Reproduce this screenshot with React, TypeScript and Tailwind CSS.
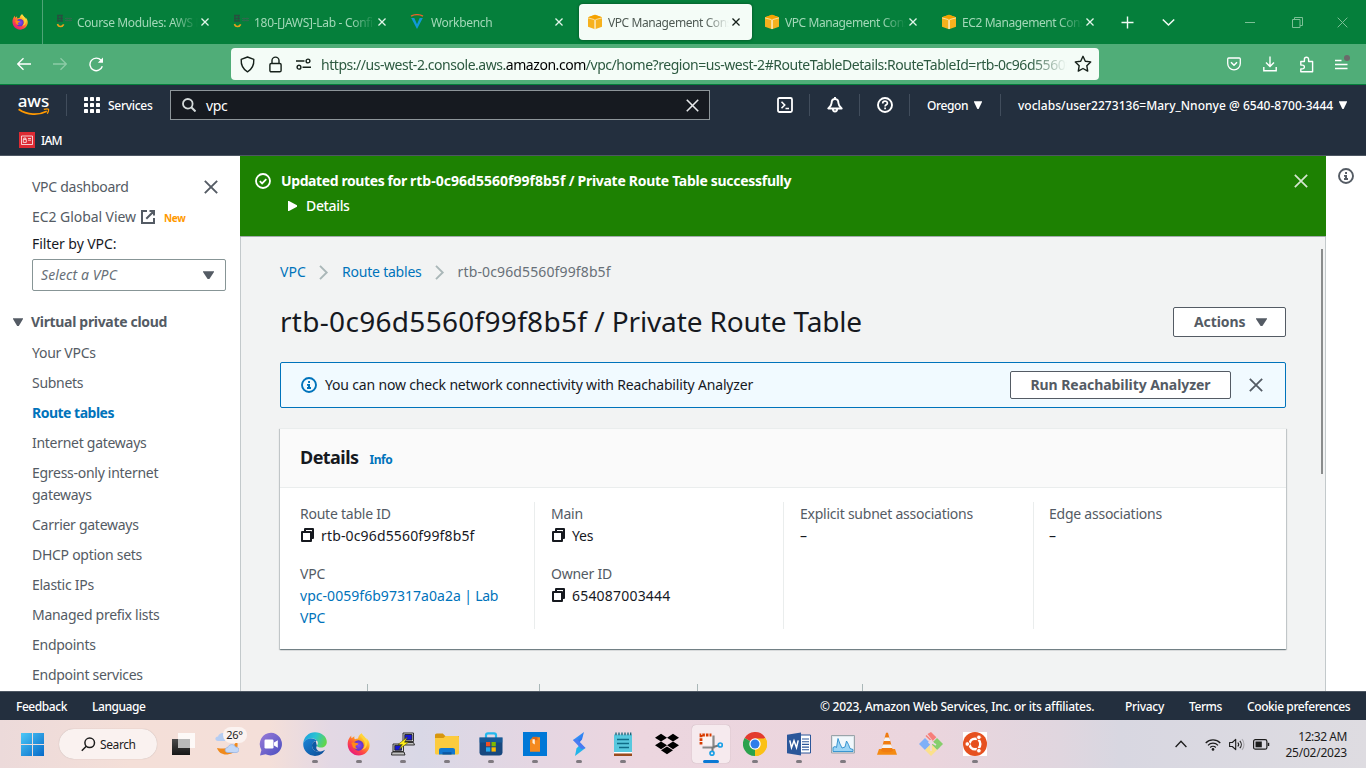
import type { ReactNode } from 'react';
import { FaDropbox } from 'react-icons/fa';

/* ---------- shared glyphs ---------- */

function Cross({ size, width = 1.2 }: { size: number; width?: number }) {
  return (
    <svg width={size} height={size} viewBox="0 0 10 10" fill="none" stroke="currentColor" strokeWidth={(width * 10) / size}>
      <path d="M.6.6l8.8 8.8M9.4.6L.6 9.4" />
    </svg>
  );
}

function CaretDown({ w = 10, h = 8 }: { w?: number; h?: number }) {
  return (
    <svg width={w} height={h} viewBox="0 0 10 8" fill="currentColor" preserveAspectRatio="none">
      <path d="M0 .3h10v.8L5.8 8H4.2L0 1.1z" />
    </svg>
  );
}

function InfoCircle() {
  return (
    <svg width="16" height="16" viewBox="0 0 16 16" fill="none" stroke="currentColor" strokeWidth="1.900">
      <circle cx="8" cy="8" r="7" />
      <path d="M7.100 4h1.900v2H7.100zM6 7h3v3h1v1.900H6V10h1V8.800H6z" fill="currentColor" stroke="none" />
    </svg>
  );
}

function CopyIcon() {
  return (
    <svg className="mr-[6px] mb-[2px] shrink-0" width="15" height="16" viewBox="0 0 15 16" fill="none" stroke="#16191f" strokeWidth="2" strokeLinejoin="round">
      <path d="M2 5h9v9H2z" />
      <path d="M5 5V2h8v9h-2" />
    </svg>
  );
}

/* ---------- browser icons ---------- */

function FirefoxLogo({ size }: { size: number }) {
  return (
    <svg width={size} height={size} viewBox="0 0 24 24">
      <defs>
        <linearGradient id="ffBody" x1="0.85" y1="0.1" x2="0.2" y2="0.95">
          <stop offset="0" stopColor="#fff44f" />
          <stop offset=".35" stopColor="#ffa01e" />
          <stop offset=".65" stopColor="#ff4a45" />
          <stop offset="1" stopColor="#e6157f" />
        </linearGradient>
        <radialGradient id="ffCore">
          <stop offset="0" stopColor="#8a4bf5" />
          <stop offset="1" stopColor="#5b32c4" />
        </radialGradient>
      </defs>
      <path
        d="M22.6 8.4c-.6-1.4-1.7-2.8-2.6-3.3.5 1 .9 2 1 2.8C19.500 4.500 17 3.200 15 .2c-2.300 1.500-3.300 3.900-3.400 5.500-1.200 0-2.300.4-3.200.9-.9-.6-.9-2-.6-3.200-1.200.5-2.200 1.400-2.900 2.200-.5-.6-.5-2.600-.4-3C4 3 3.300 3.900 2.600 4.900 1.300 6.800.6 9.300.7 12c.2 6.300 5.200 11.500 11.600 11.500 5.800 0 10.700-4.300 11.300-9.900.2-1.800-.2-3.600-1-5.200z"
        fill="url(#ffBody)"
      />
      <circle cx="12" cy="13" r="5.400" fill="url(#ffCore)" />
      <path d="M4.500 10.500c1.300-1.200 3.200-1.200 4.300-.4l3.200.8c-.3 1.500-2 1.700-2.700 2.200-1 1-.2 2.700 1.700 3-2.600 1-5.500-.4-5.500-3.600z" fill="#ff8a16" />
      <path d="M15 .2c-1.900 4 2.500 5.500 3.400 9.600.8 3.500-.9 6.400-3.300 7.800 4.600-.6 7-5 5.500-9.800C19.200 4.600 17 3.200 15 .2z" fill="#ffd43a" />
    </svg>
  );
}

function JawsFavicon() {
  return (
    <svg width="17" height="16" viewBox="0 0 17 16" fill="none">
      <path d="M1 1.500h6M1 4.500h6M2 1v6M5.500 1v6M1 7h6" stroke="#27503f" strokeWidth="1.400" />
      <path d="M9 4.500h7M9 6.500h7M11 3.500v4M14 3.500v4" stroke="#2e6b4d" strokeWidth="1" />
      <path d="M1.500 10c.8 3.200 4.700 3.400 6.200.3" stroke="#e9a21c" strokeWidth="1.600" />
    </svg>
  );
}

function WorkbenchFavicon() {
  return (
    <svg width="14" height="16" viewBox="0 0 14 16" fill="none">
      <path d="M1 2.200C4.500.4 9.500.4 13 2.200" stroke="#e8622a" strokeWidth="1.400" />
      <path d="M1.200 4l5.800 11L12.800 4H9.700L7 10.300 4.300 4z" fill="#1199d6" />
    </svg>
  );
}

function AwsCube() {
  return (
    <svg width="16" height="16" viewBox="0 0 16 16">
      <path d="M1 3.300L8 .8l7 2.500v9.500L8 15.300 1 12.800z" fill="#f6b11e" />
      <path d="M1 3.300L8 .8l7 2.500-7 1.900z" fill="#f5a300" />
      <path d="M1 3.900l6 1.600M9 5.500l6-1.600" fill="none" stroke="#fff" strokeOpacity=".7" strokeWidth=".8" />
      <path d="M7.200 5.600h1.700v9.300H7.200z" fill="#fdf0cf" fillOpacity=".8" />
    </svg>
  );
}

interface TabInfo {
  title: string;
  icon: ReactNode;
  tracking: string;
  active?: boolean;
}

const browserTabs: TabInfo[] = [
  { title: 'Course Modules: AWS Re/', icon: <JawsFavicon />, tracking: 'tracking-[-0.36px]' },
  { title: '180-[JAWS]-Lab - Configure', icon: <JawsFavicon />, tracking: 'tracking-[-0.3px]' },
  { title: 'Workbench', icon: <WorkbenchFavicon />, tracking: 'tracking-[-0.34px]' },
  { title: 'VPC Management Console', icon: <AwsCube />, tracking: 'tracking-[-0.42px]', active: true },
  { title: 'VPC Management Console', icon: <AwsCube />, tracking: 'tracking-[-0.42px]' },
  { title: 'EC2 Management Console', icon: <AwsCube />, tracking: 'tracking-[-0.4px]' },
];

function BrowserTab({ title, icon, tracking, active }: TabInfo) {
  return (
    <div
      className={
        active
          ? 'mr-1 flex h-9 w-[173px] shrink-0 items-center rounded-[4px] bg-[#f4fcf7] pl-2 text-[#4f5a54] shadow-[0_0_3px_rgba(0,0,0,0.45)]'
          : 'mr-1 flex h-9 w-[173px] shrink-0 items-center pl-2 text-[#a3d8b8]'
      }
    >
      <span className="flex w-[21px] shrink-0">{icon}</span>
      <span
        className={`mt-[2px] w-[121px] shrink-0 overflow-hidden text-[12px] whitespace-nowrap [mask-image:linear-gradient(to_right,#000_80%,transparent_100%)] ${tracking}`}
      >
        {title}
      </span>
      <span className={active ? 'ml-[3px] text-[#15201a]' : 'ml-[3px] text-[#e2f6ea]'}>
        <Cross size={8} width={1.3} />
      </span>
    </div>
  );
}

function TabStrip() {
  return (
    <div className="flex h-11 items-center bg-[#057f3b]">
      <div className="flex h-11 w-[43px] items-center justify-center border-r border-[#4fa477] pr-[3px]">
        <FirefoxLogo size={16} />
      </div>
      <div className="ml-[5px] flex">
        {browserTabs.map((t, i) => (
          <BrowserTab key={i} {...t} />
        ))}
      </div>
      <div className="ml-[11px] flex text-[#f0fbf4]">
        <svg width="13" height="13" viewBox="0 0 13 13" stroke="currentColor" strokeWidth="1.400">
          <path d="M6.500.500v12M.500 6.500h12" />
        </svg>
        <svg className="ml-7" width="13" height="13" viewBox="0 0 13 13" fill="none" stroke="currentColor" strokeWidth="1.600">
          <path d="M.8 3.500l5.700 5.500 5.700-5.500" />
        </svg>
      </div>
      <div className="ml-[70px] flex items-center text-[#7cc096]">
        <svg width="11" height="11" viewBox="0 0 11 11" stroke="currentColor">
          <path d="M0 5.500h10" />
        </svg>
        <svg className="ml-[36px]" width="11" height="11" viewBox="0 0 11 11" fill="none" stroke="currentColor">
          <path d="M.5 2.500h7.500v8H.5zM2.500 2.500v-2h8v8H8" />
        </svg>
        <span className="ml-[34px]">
          <Cross size={11} width={1} />
        </span>
      </div>
    </div>
  );
}

function NavToolbar() {
  return (
    <div className="flex h-[41px] items-center border-b border-[#057f3b] bg-[#50ad78]">
      <div className="ml-[17px] flex gap-[22px] text-white">
        <svg width="14" height="14" viewBox="0 0 14 14" fill="none" stroke="currentColor" strokeWidth="1.300">
          <path d="M14 7H.8M6.500 1.200L.7 7l5.800 5.800" />
        </svg>
        <svg className="text-[#8ccba6]" width="14" height="14" viewBox="0 0 14 14" fill="none" stroke="currentColor" strokeWidth="1.300">
          <path d="M0 7h13.200M7.500 1.200L13.300 7l-5.800 5.800" />
        </svg>
        <svg width="15" height="15" viewBox="0 0 15 15" fill="none" stroke="currentColor" strokeWidth="1.400">
          <path d="M13.300 9.300a6.300 6.300 0 1 1-1.200-6" />
          <path d="M14 .6v5.200H8.800z" fill="currentColor" stroke="none" />
        </svg>
      </div>
      <div className="ml-[127px] flex h-8 w-[868px] items-center rounded-[4px] bg-[#f4fcf7] pl-[9px] text-[#15201a]">
        <svg width="15" height="17" viewBox="0 0 15 17" fill="none" stroke="currentColor" strokeWidth="1.400" strokeLinejoin="round">
          <path d="M7.500 1l6.300 2.300c.3 5.500-1.800 10-6.300 12.500C3 13.300.9 8.800 1.200 3.300z" />
        </svg>
        <svg className="ml-[14px]" width="13" height="17" viewBox="0 0 13 17" fill="none" stroke="currentColor" strokeWidth="1.400">
          <rect x=".9" y="7.500" width="11.200" height="8.300" rx="1.300" />
          <path d="M3 7.500V4.600a3.500 3.500 0 0 1 7 0v2.900" />
        </svg>
        <svg className="ml-[14px]" width="15" height="12" viewBox="0 0 15 12" fill="none" stroke="currentColor" strokeWidth="1.400">
          <path d="M0 3h8.500M6.500 9.200H15" />
          <circle cx="12" cy="3" r="1.900" />
          <circle cx="3" cy="9.200" r="1.900" />
        </svg>
        <div className="ml-[10px] w-[746px] overflow-hidden text-[14px] tracking-[-0.46px] whitespace-nowrap text-[#2d5a41] [mask-image:linear-gradient(to_right,#000_95%,transparent_100%)]">
          https://us-west-2.console.aws.<span className="text-black">amazon.com</span>
          /vpc/home?region=us-west-2#RouteTableDetails:RouteTableId=rtb-0c96d5560f99f8b5f
        </div>
        <svg className="ml-[7px]" width="18" height="18" viewBox="0 0 18 18" fill="none" stroke="currentColor" strokeWidth="1.400" strokeLinejoin="round">
          <path d="M9 1.300l2.300 4.900 5.400.7-3.900 3.800.9 5.400L9 13.500l-4.700 2.600.9-5.400L1.300 6.900l5.400-.7z" />
        </svg>
      </div>
      <div className="ml-[128px] flex items-center text-white">
        <svg width="14" height="14" viewBox="0 0 14 14" fill="none" stroke="currentColor" strokeWidth="1.300" strokeLinejoin="round">
          <path d="M1.700 1h10.600c.6 0 1 .4 1 1v4.500a6.300 6.300 0 0 1-12.600 0V2c0-.6.400-1 1-1z" />
          <path d="M4 5.300l3 2.900 3-2.900" strokeWidth="1.500" />
        </svg>
        <svg className="ml-[22px]" width="14" height="16" viewBox="0 0 14 16" fill="none" stroke="currentColor" strokeWidth="1.400">
          <path d="M7 .5v9.700M3 6.500l4 4 4-4M.8 11v3.700h12.400V11" />
        </svg>
        <svg className="ml-[22px]" width="15" height="17" viewBox="0 0 15 17" fill="none" stroke="currentColor" strokeWidth="1.400" strokeLinejoin="round">
          <path d="M1.800 5.500h3.600V3.300a2.100 2.100 0 0 1 4.200 0v2.200h4v10.300H1.800v-2.900h1.700a1.900 1.900 0 0 0 0-3.800H1.800z" />
        </svg>
        <svg className="mb-[5px] ml-[21px]" width="16" height="16" viewBox="0 0 16 16" fill="none" stroke="currentColor" strokeWidth="1.300">
          <path d="M0 6.500h6.500M0 10.500h12.500M0 14.500h12.500" />
          <circle cx="12" cy="4" r="3" fill="#6a6a6a" stroke="none" />
        </svg>
      </div>
    </div>
  );
}

/* ---------- AWS console header ---------- */

function AwsLogo() {
  return (
    <div className="mt-[2px] ml-[18px] flex w-[31px] flex-col items-center text-white">
      <span className="h-[11px] text-[17px] leading-[9px] font-medium">aws</span>
      <svg className="mt-[1px]" width="32" height="8" viewBox="0 0 32 8" fill="none" stroke="#ff9900" strokeWidth="1.800">
        <path d="M.6 1.300c8.500 6 20 6.300 28.200 2" />
        <path d="M25.800 1.400c2-.6 4-.8 4.600-.2.500.7-.1 2.700-1.100 4.600" strokeWidth="1.300" />
      </svg>
    </div>
  );
}

function NavDivider({ className }: { className: string }) {
  return <div className={`h-[22px] w-px shrink-0 bg-[#414d5c] ${className}`} />;
}

function ConsoleHeader() {
  return (
    <header className="h-[71px] border-b border-[#4d5763] bg-[#232f3e] text-[12px] font-medium text-white">
      <div className="flex h-10 items-center">
        <AwsLogo />
        <NavDivider className="ml-[17px]" />
        <svg className="ml-[17px]" width="16" height="16" viewBox="0 0 16 16" fill="#fff">
          {[0, 6, 12].map((y) => [0, 6, 12].map((x) => <rect key={`${x}-${y}`} x={x} y={y} width="4" height="4" rx=".4" />))}
        </svg>
        <span className="mt-[2px] ml-2 w-[46px] tracking-[-0.28px]">Services</span>
        <div className="ml-4 flex h-[30px] w-[540px] items-center border border-[#8d9599] bg-[#161a20] pr-[10px] pl-[11px]">
          <svg width="14" height="14" viewBox="0 0 14 14" fill="none" stroke="#d5dbdb" strokeWidth="1.800">
            <circle cx="5.800" cy="5.800" r="4.800" />
            <path d="M9.300 9.300l4.200 4.200" strokeWidth="2" />
          </svg>
          <span className="ml-[10px] flex-1 text-[14px] font-normal tracking-[-0.3px]">vpc</span>
          <span className="text-[#e6e9ea]">
            <Cross size={13} width={1.6} />
          </span>
        </div>
        <svg className="ml-[67px]" width="16" height="16" viewBox="0 0 16 16" fill="none" stroke="#fff" strokeWidth="1.800">
          <rect x="1" y="1" width="14" height="14" rx="1.500" />
          <path d="M4.500 4.800L7.700 8l-3.200 3.200M8.500 11.500H12" strokeWidth="1.600" />
        </svg>
        <NavDivider className="ml-[16px]" />
        <svg className="ml-[17px]" width="16" height="16" viewBox="0 0 16 16" fill="none" stroke="#fff" strokeWidth="1.900" strokeLinejoin="round">
          <path d="M8 0v2M8 2C5.500 2 4.600 3.800 4.600 6c0 2.200-1 3.500-3.300 5.500h13.400C12.400 9.500 11.400 8.200 11.400 6 11.400 3.800 10.500 2 8 2z" />
          <path d="M5.900 12a2.100 2.500 0 0 0 4.200 0" />
        </svg>
        <NavDivider className="ml-[16px]" />
        <svg className="ml-[17px]" width="16" height="16" viewBox="0 0 16 16" fill="none" stroke="#fff" strokeWidth="1.900">
          <circle cx="8" cy="8" r="7" />
          <path d="M5.700 6.400c0-3 4.700-3 4.700-.2 0 1.600-2.300 1.600-2.300 3.200M8.100 10.500v1.700" strokeWidth="1.700" />
        </svg>
        <NavDivider className="ml-[16px]" />
        <span className="mt-[2px] ml-[17px] w-[47px] tracking-[-0.4px]">Oregon</span>
        <CaretDown w={8} h={8} />
        <NavDivider className="ml-[18px]" />
        <span className="mt-[2px] ml-[17px] w-[321px] tracking-[0.02px] whitespace-nowrap">voclabs/user2273136=Mary_Nnonye @ 6540-8700-3444</span>
        <CaretDown w={8} h={8} />
      </div>
      <div className="flex h-[30px] items-center pl-[19px]">
        <svg width="16" height="16" viewBox="0 0 16 16" fill="none" stroke="#fff" strokeOpacity=".85" strokeWidth=".9">
          <rect width="16" height="16" fill="#dd2b34" stroke="none" />
          <path d="M2.500 4h11v8.500h-11zM4.300 7.400h3v3h-3zM4.800 7.400V6h2v1.400M9 6.500h3M9 8.200h3" />
        </svg>
        <span className="mt-[2px] ml-[6px] tracking-[-0.8px]">IAM</span>
      </div>
    </header>
  );
}

/* ---------- sidebar ---------- */

const vpcLinks = [
  'Your VPCs',
  'Subnets',
  'Route tables',
  'Internet gateways',
  'Egress-only internet gateways',
  'Carrier gateways',
  'DHCP option sets',
  'Elastic IPs',
  'Managed prefix lists',
  'Endpoints',
  'Endpoint services',
];

function Sidebar() {
  return (
    <nav className="h-full w-[240px] shrink-0 overflow-hidden bg-white pt-5 text-[14px] leading-[22px] tracking-[-0.28px] text-[#545b64]">
      <div className="flex items-center justify-between pr-[22px] pl-8">
        <span>VPC dashboard</span>
        <Cross size={14} width={1.9} />
      </div>
      <div className="mt-2 flex h-[22px] items-center pl-8">
        <span className="tracking-[-0.06px]">EC2 Global View</span>
        <svg className="ml-[5px]" width="14" height="14" viewBox="0 0 14 14" fill="none" stroke="currentColor" strokeWidth="2">
          <path d="M6 1H1v12h12V8M8.500 1H13v4.500M13 1L5.300 8.700" />
        </svg>
        <span className="mt-[2px] ml-[9px] text-[10px] leading-none font-bold tracking-[-0.3px] text-[#ff9900]">New</span>
      </div>
      <div className="mt-[5px] pl-8 tracking-[-0.07px] text-[#16191f]">Filter by VPC:</div>
      <div className="mt-1 ml-8 flex h-8 w-[194px] items-center justify-between rounded-[2px] border border-[#879596] pr-[11px] pl-2">
        <span className="tracking-[0.1px] text-[#687078] italic">Select a VPC</span>
        <CaretDown w={11} h={8} />
      </div>
      <div className="mt-5 flex items-center pl-[13px] font-bold tracking-[-0.32px]">
        <CaretDown w={10} h={8} />
        <span className="ml-2">Virtual private cloud</span>
      </div>
      <ul className="mt-[9px] flex flex-col gap-2 pl-8">
        {vpcLinks.map((link) => (
          <li key={link} className={link === 'Route tables' ? 'font-bold tracking-[-0.5px] text-[#0073bb]' : 'w-[150px]'}>
            {link}
          </li>
        ))}
      </ul>
    </nav>
  );
}

/* ---------- main content ---------- */

function SuccessBanner() {
  return (
    <div className="flex h-20 shrink-0 bg-[#1d8102] pt-[14px] pr-[18px] pl-[15px] text-[14px] leading-[22px] text-white">
      <svg className="mt-[3px]" width="16" height="16" viewBox="0 0 16 16" fill="none" stroke="#fff" strokeWidth="1.800">
        <circle cx="8" cy="8" r="7" />
        <path d="M4.800 8.200l2.300 2.200 4.200-4.300" />
      </svg>
      <div className="ml-[10px] flex-1">
        <div className="font-bold tracking-[-0.4px]">
          Updated routes for <span className="tracking-[0.02px]">rtb-0c96d5560f99f8b5f</span>
          <span className="tracking-[-0.29px]"> / Private Route Table successfully</span>
        </div>
        <div className="mt-[3px] flex items-center pl-[7px]">
          <svg width="9" height="10" viewBox="0 0 9 10" fill="#fff">
            <path d="M0 0h1l8 4.300v1.400L1 10H0z" />
          </svg>
          <span className="ml-[9px] font-medium tracking-[-0.35px]">Details</span>
        </div>
      </div>
      <span className="mt-[4px] text-[#d5e6d0]">
        <Cross size={14} width={1.7} />
      </span>
    </div>
  );
}

function Chevron() {
  return (
    <svg className="mx-[13px]" width="10" height="15" viewBox="0 0 10 15" fill="none" stroke="#aab7b8" strokeWidth="1.900">
      <path d="M1 .8l6.700 6.700L1 14.200" />
    </svg>
  );
}

function Field({ label, children }: { label: string; children: ReactNode }) {
  return (
    <div>
      <div className="text-[#545b64]">{label}</div>
      <div className="h-[22px] text-[#16191f]">{children}</div>
    </div>
  );
}

function DetailsPanel() {
  return (
    <section className="mt-[20px] h-[221px] border-t border-[#eaeded] bg-white shadow-[0_1px_1px_0_rgba(0,28,36,0.35),1px_1px_1px_0_rgba(0,28,36,0.15),-1px_1px_1px_0_rgba(0,28,36,0.15)]">
      <div className="flex h-[59px] items-center border-b border-[#eaeded] bg-[#fafafa] px-5 pb-px">
        <h2 className="text-[18px] font-bold tracking-[-0.54px] text-[#16191f]">Details</h2>
        <span className="mt-1 ml-[11px] text-[12px] font-bold tracking-[-0.5px] text-[#0073bb]">Info</span>
      </div>
      <div className="mt-[14px] grid h-[127px] grid-cols-[255px_249px_250px_252px] text-[14px] leading-[22px] tracking-[-0.24px]">
        <div className="flex flex-col gap-4 border-r border-[#eaeded] pt-px pl-5">
          <Field label="Route table ID">
            <span className="flex items-center tracking-[0.15px]">
              <CopyIcon />
              rtb-0c96d5560f99f8b5f
            </span>
          </Field>
          <Field label="VPC">
            <a className="block w-[200px] tracking-[-0.24px] text-[#0073bb]">
              <span className="tracking-[0.04px]">vpc-0059f6b97317a0a2a</span> | Lab VPC
            </a>
          </Field>
        </div>
        <div className="flex flex-col gap-4 border-r border-[#eaeded] pt-px pl-4">
          <Field label="Main">
            <span className="flex items-center">
              <CopyIcon />
              Yes
            </span>
          </Field>
          <Field label="Owner ID">
            <span className="flex items-center tracking-[0.2px]">
              <CopyIcon />
              654087003444
            </span>
          </Field>
        </div>
        <div className="border-r border-[#eaeded] pt-px pl-4">
          <Field label="Explicit subnet associations">–</Field>
        </div>
        <div className="pt-px pl-[15px]">
          <Field label="Edge associations">–</Field>
        </div>
      </div>
    </section>
  );
}

function Content() {
  return (
    <div className="flex flex-1 border-t border-[#a3abad]">
      <div className="w-10 shrink-0 border-l border-[#c3c9cb]" />
      <div className="w-[1006px] shrink-0 pt-6">
        <div className="flex items-center text-[14px] leading-[22px] tracking-[-0.22px] text-[#0073bb]">
          <span className="tracking-[0.1px]">VPC</span>
          <Chevron />
          <span>Route tables</span>
          <Chevron />
          <span className="tracking-[0.13px] text-[#687078]">rtb-0c96d5560f99f8b5f</span>
        </div>
        <div className="mt-5 flex h-[38px] items-center justify-between">
          <h1 className="mb-[2px] text-[28px] leading-9 tracking-[-0.14px] text-[#16191f]">
            <span className="tracking-[0.3px]">rtb-0c96d5560f99f8b5f</span> / Private Route Table
          </h1>
          <div className="flex h-[30px] w-[113px] items-center rounded-[2px] border border-[#545b64] bg-white pb-px pl-5 text-[14px] font-bold tracking-[-0.1px] text-[#545b64]">
            <span className="mr-[11px]">Actions</span>
            <CaretDown w={11} h={8} />
          </div>
        </div>
        <div className="mt-[21px] flex h-[46px] items-center rounded-[2px] border border-[#0073bb] bg-[#f1faff] pl-5 text-[14px]">
          <span className="text-[#0073bb]">
            <InfoCircle />
          </span>
          <span className="mb-px ml-2 flex-1 tracking-[-0.17px] text-[#16191f]">You can now check network connectivity with Reachability Analyzer</span>
          <span className="flex h-7 w-[221px] items-center justify-center rounded-[2px] border border-[#545b64] bg-white pb-px font-bold tracking-[-0.06px] text-[#545b64]">
            Run Reachability Analyzer
          </span>
          <span className="mr-[22px] ml-[18px] text-[#545b64]">
            <Cross size={14} width={1.8} />
          </span>
        </div>
        <DetailsPanel />
        <div className="mt-[35px] grid h-[7px] grid-cols-[88px_172px_158px_165px]">
          <div className="border-r border-[#aab7b8]" />
          <div className="border-r border-[#aab7b8]" />
          <div className="border-r border-[#aab7b8]" />
          <div className="border-r border-[#aab7b8]" />
        </div>
      </div>
      <div className="flex flex-1 justify-end border-r border-[#c3c9cb] pt-3 pr-[2px]">
        <div className="h-[225px] w-[2px] bg-[#8a8c8c]" />
      </div>
    </div>
  );
}

function ConsoleFooter() {
  return (
    <footer className="flex h-[29px] items-center border-t border-[#4d5763] bg-[#232f3e] pt-[2px] pl-4 text-[12px] font-medium tracking-[-0.43px] whitespace-nowrap text-white">
      <span className="w-[76px]">Feedback</span>
      <span className="w-[728px]">Language</span>
      <span className="w-[305px] tracking-[-0.25px]">© 2023, Amazon Web Services, Inc. or its affiliates.</span>
      <span className="w-16 tracking-[-0.29px]">Privacy</span>
      <span className="w-[58px]">Terms</span>
      <span className="tracking-[-0.41px]">Cookie preferences</span>
    </footer>
  );
}

/* ---------- taskbar ---------- */

function Icon({ children }: { children: ReactNode }) {
  return (
    <svg width="24" height="24" viewBox="0 0 24 24" fill="none">
      {children}
    </svg>
  );
}

const taskView = (
  <Icon>
    <defs>
      <linearGradient id="tvDark" x1="0" y1="0" x2="0" y2="1">
        <stop offset="0" stopColor="#4a4a4a" />
        <stop offset="1" stopColor="#161616" />
      </linearGradient>
    </defs>
    <rect x="1" y="7" width="18" height="16" fill="url(#tvDark)" />
    <rect x="7" y="1" width="17" height="15" fill="#fff" fillOpacity=".8" />
    <rect x="7" y="7" width="12" height="9" fill="#b9b9b9" />
  </Icon>
);

const chat = (
  <Icon>
    <defs>
      <linearGradient id="chatBg" x1="0" y1="0" x2="1" y2="1">
        <stop offset="0" stopColor="#9a7bd8" />
        <stop offset="1" stopColor="#4a4fc0" />
      </linearGradient>
    </defs>
    <path d="M12 .8a11.300 11.300 0 1 1-5.400 21.400L1 23.500l1.400-5.600A11.300 11.300 0 0 1 12 .8z" fill="url(#chatBg)" />
    <rect x="5.500" y="7.500" width="9" height="9" rx="1.200" fill="#fff" />
    <path d="M15 10.500l3.800-2.300v7.600L15 13.500z" fill="#fff" />
  </Icon>
);

const edge = (
  <Icon>
    <defs>
      <linearGradient id="edgeTop" x1="0" y1=".2" x2="1" y2=".5">
        <stop offset="0" stopColor="#1c9fe0" />
        <stop offset=".5" stopColor="#2bc3d2" />
        <stop offset="1" stopColor="#63d64a" />
      </linearGradient>
      <linearGradient id="edgeLow" x1="0" y1="0" x2="1" y2="1">
        <stop offset="0" stopColor="#1b86d8" />
        <stop offset="1" stopColor="#0b4a93" />
      </linearGradient>
    </defs>
    <path d="M.2 11.400C.7 5 5.700.2 12 .2c6.800 0 11.800 4.500 11.800 9.800 0 3.500-2.600 5.600-5.700 5.600-2.300 0-4.200-.9-4.200-1.800 0-.6 1-1.100 1-2.700C14.900 8.500 12 6.500 8.700 6.500 4.700 6.500 1.500 8.300.2 11.400z" fill="url(#edgeTop)" />
    <path d="M.2 11.800C.8 8.700 4.200 6.500 8.300 6.500c2.500 0 4.700 1 5.700 2.300-3.700.2-5.500 3-4.800 6.200.8 3.500 4.600 5.400 8.300 4.600 1.800-.4 3.400-1.200 4.600-1.900-2 3.800-5.800 6.200-10.100 6.200C5.300 23.900 0 18.500.2 11.800z" fill="url(#edgeLow)" />
    <path d="M12.700 9c-3 .8-4.300 3.200-3.500 6 .9 3.500 4.600 5.400 8.300 4.600-3.500-.6-5.300-3.500-3.600-5.800z" fill="#0c59a4" />
  </Icon>
);

const putty = (
  <Icon>
    <g stroke="#222" strokeWidth=".9">
      <path d="M12 1h10.500v8.500H12z" fill="#d9d9d9" />
      <path d="M10.500 10.500h12l1 2.500h-12z" fill="#c3c3c3" />
      <path d="M2 12h10.500v7.500H2z" fill="#d9d9d9" />
      <path d="M1 20h12l1 3H.5z" fill="#c3c3c3" />
      <path d="M13.800 2.500H21V8h-7.200zM3.800 13.400h6.700v4.800H3.800z" fill="#1516d6" />
    </g>
    <path d="M16.500 5L7 12.500h4.300L8 17.500l9.500-7.300h-4z" fill="#ffee1a" stroke="#3a3a00" strokeWidth=".5" />
  </Icon>
);

const explorer = (
  <Icon>
    <path d="M0 3.500C0 2.300.7 1.600 1.800 1.600h6L10.300 4H24v4H0z" fill="#d7960f" />
    <path d="M0 6h8.500l2-2H22.500c1 0 1.500.5 1.500 1.500V21c0 .9-.6 1.500-1.500 1.500H1.500C.6 22.500 0 21.900 0 21z" fill="#fccb3e" />
    <path d="M4 22.500v-4.300c0-1.400.8-2.200 2.200-2.200h11.600c1.400 0 2.200.8 2.200 2.200v4.300z" fill="#1178d0" />
    <path d="M7.500 22.500v-2.300h9v2.300z" fill="#0b56a0" />
  </Icon>
);

const store = (
  <Icon>
    <path d="M7 6V3.200C7 2 7.700 1.300 9 1.300h6c1.300 0 2 .7 2 1.900V6" stroke="#22b8ee" strokeWidth="2.200" />
    <path d="M.5 5.500h23v14.700c0 2-1.200 3.300-3.300 3.300H3.800C1.700 23.500.5 22.200.5 20.200z" fill="#17487f" />
    <path d="M.5 5.500h23v5H.5z" fill="#1769ad" fillOpacity=".55" />
    <path d="M7 10h4.300v4.300H7z" fill="#f25022" />
    <path d="M12.500 10h4.300v4.300h-4.300z" fill="#7fba00" />
    <path d="M7 15.300h4.300v4.300H7z" fill="#25a8ee" />
    <path d="M12.500 15.300h4.300v4.300h-4.300z" fill="#ffb900" />
  </Icon>
);

const installer = (
  <Icon>
    <path d="M0 0h24v24H0z" fill="#0078d7" />
    <path d="M7 8l3-2.800h7v14.600H7z" fill="#f58a1f" />
    <path d="M9.500 4.800h5v3.400h-5z" fill="#d9661b" />
    <path d="M9.500 7.200h2.300v5.300l-2.300-1.500z" fill="#fff1de" />
  </Icon>
);

const sharp = (
  <Icon>
    <defs>
      <linearGradient id="boltBlue" x1="0" y1="0" x2="1" y2="1">
        <stop offset="0" stopColor="#3fb9ff" />
        <stop offset="1" stopColor="#2457e8" />
      </linearGradient>
    </defs>
    <path d="M17 0L6 8l5 4 4-4.500z" fill="url(#boltBlue)" />
    <path d="M8 24l10.500-8-5-4-4 4.500z" fill="#21b5ea" />
    <path d="M6 8l4-1 8.500 9-4 1.200z" fill="#4a7bf2" />
  </Icon>
);

const notepad = (
  <Icon>
    <path d="M3 2.500h18v18.300H3z" fill="#58c8de" />
    <path d="M3 20h18v1.600H3z" fill="#fff" />
    <path d="M3 21.500h18V24H3z" fill="#9a4a1c" />
    <path d="M5 .5v2.800M8 .5v2.800M11 .5v2.800M14 .5v2.800M17 .5v2.800M19.700.5v2.800" stroke="#155f75" strokeWidth="1.300" />
    <path d="M6 7.500h12M6 11.500h12M8 15.500h10" stroke="#0f6c88" strokeWidth="1.500" />
  </Icon>
);

const snip = (
  <Icon>
    <path d="M2 2h11v11H2z" fill="#fbf4f4" />
    <path d="M2 12.500V3h10.500" stroke="#d83b01" strokeWidth="2.800" strokeDasharray="2.600 1" />
    <path d="M14.500 3.500v12h-11" stroke="#8a8a8a" strokeWidth="2.200" />
    <path d="M14 15l5.500-1.500M13.500 15v4" stroke="#777" strokeWidth="2" />
    <circle cx="21.300" cy="13" r="2" stroke="#1aa0e6" strokeWidth="1.700" />
    <circle cx="13" cy="21.300" r="2" stroke="#1aa0e6" strokeWidth="1.700" />
  </Icon>
);

const chrome = (
  <Icon>
    <path d="M12 12L1.600 6A12 12 0 0 1 22.400 6z" fill="#e33b2e" />
    <path d="M12 12l10.400-6A12 12 0 0 1 12 24z" fill="#fbc116" />
    <path d="M12 12v12A12 12 0 0 1 1.600 6z" fill="#2ba24c" />
    <path d="M12 6.500h10.700A12 12 0 0 1 12 24l4.800-9.200z" fill="#fbc116" />
    <circle cx="12" cy="12" r="5.700" fill="#fff" />
    <circle cx="12" cy="12" r="4.500" fill="#2f7de9" />
  </Icon>
);

const word = (
  <Icon>
    <path d="M12 3h11.500v18H12z" fill="#fff" stroke="#2b579a" strokeWidth="1" />
    <path d="M15 7h7M15 9.700h7M15 12.400h7M15 15.100h7M15 17.800h7" stroke="#2b579a" strokeWidth="1.100" />
    <path d="M0 2.800L14 .5v23L0 21.200z" fill="#2b579a" />
    <path d="M2.800 8.300l1.700 7.400L7 8.800l2.500 6.900 1.700-7.400" stroke="#fff" strokeWidth="1.500" />
  </Icon>
);

const perf = (
  <Icon>
    <path d="M.5 3.500h23v17.500H.5z" fill="#dfe6ea" stroke="#9aa4aa" />
    <path d="M2 5h20v14.500H2z" fill="#f1f8fc" />
    <path d="M2 19.500v-4l2-1 1.500 1L7 6.500 9 12l2 4 3-1 1.500-6 2 3.500 1.500 4 3 1v2z" fill="#9ad4f5" stroke="#2b8ccc" strokeWidth=".9" />
  </Icon>
);

const vlc = (
  <Icon>
    <path d="M4 17h16l2 5.800H2z" fill="#f58a12" />
    <path d="M11 .8h2L18 19c-2.500 1.700-9.500 1.700-12 0z" fill="#f07c10" />
    <path d="M9.700 5.500h4.600l1 3.500H8.700zM7.700 12.500h8.600l1 3.500H6.700z" fill="#f4f4f4" />
  </Icon>
);

const git = (
  <Icon>
    <path d="M8.500 2L12 0l5.300 5.300-3.500 3.500z" fill="#f77e79" />
    <path d="M7 3.500L20 16" stroke="#f77e79" strokeWidth="1.500" />
    <path d="M0 12l6-6 6 6-6 6z" fill="#7fb0f7" />
    <path d="M18 6l6 6-6 6-6-6z" fill="#86ce6c" />
    <path d="M12 12l6 6-6 6-6-6z" fill="#fbe08c" />
    <path d="M9 10.500l3-3 3 3-3 3z" fill="#ecd8e0" />
    <path d="M12 8v11M12 10l5 3" stroke="#ecd8e0" strokeWidth="1.600" />
  </Icon>
);

const ubuntu = (
  <Icon>
    <path d="M0 0h24v24H0z" fill="#fff" />
    <circle cx="12" cy="12" r="12" fill="#e6501f" />
    <circle cx="12" cy="12" r="5.300" stroke="#fff" strokeWidth="2.500" />
    <path d="M12 12L3.500 12M12 12l4.300-7.400M12 12l4.300 7.400" stroke="#e6501f" strokeWidth="1.200" />
    <circle cx="4.300" cy="12" r="2.300" fill="#fff" stroke="#e6501f" strokeWidth=".9" />
    <circle cx="15.900" cy="5.300" r="2.300" fill="#fff" stroke="#e6501f" strokeWidth=".9" />
    <circle cx="15.900" cy="18.700" r="2.300" fill="#fff" stroke="#e6501f" strokeWidth=".9" />
  </Icon>
);

function Weather() {
  return (
    <div className="relative h-6 w-6">
      <svg width="24" height="24" viewBox="0 0 24 24">
        <path d="M2 16c2 6.500 9 8 15.500 5C23 18 24 12 21 8c0 6-6 10-19 8z" fill="#f08a1d" />
        <path d="M3 9C-.5 9-.5 4.500 3 4.500 4 1 8.500 0 11 2.500V9z" fill="#b5cdf3" />
        <path d="M13 20.500c-4 0-3.500-5-.2-5 .9-3.500 6.400-4 7.700-.5 4.500 0 4.500 5.500.5 5.500z" fill="#c3d8f8" stroke="#8fb2e6" strokeWidth=".7" />
      </svg>
      <span className="absolute -top-[5px] left-[8px] flex h-4 w-6 items-center justify-center rounded-full bg-[#fbf3f1] text-[11px] tracking-[-0.3px] text-[#1b1b1b]">
        26°
      </span>
    </div>
  );
}

interface TaskItem {
  icon: ReactNode;
  running?: boolean;
  focused?: boolean;
}

const taskItems: TaskItem[] = [
  { icon: taskView },
  { icon: <Weather /> },
  { icon: chat },
  { icon: edge, running: true },
  { icon: <FirefoxLogo size={23} />, running: true },
  { icon: putty, running: true },
  { icon: explorer, running: true },
  { icon: store, running: true },
  { icon: installer, running: true },
  { icon: sharp, running: true },
  { icon: notepad, running: true },
  { icon: <FaDropbox size={24} color="#000" /> },
  { icon: snip, focused: true },
  { icon: chrome, running: true },
  { icon: word, running: true },
  { icon: perf, running: true },
  { icon: vlc },
  { icon: git },
  { icon: ubuntu, running: true },
];

function Taskbar() {
  return (
    <div className="flex h-12 items-center bg-[linear-gradient(to_right,#ecdada_0px,#f4dfd8_130px,#f4dfd9_270px,#e3d8e4_330px,#d9d8e6_420px,#e5d6e2_540px,#ecd6df_640px,#ebd5dd_930px,#e0d6df_1060px,#d8d7e1_1120px,#dedce1_1366px)] text-[#1c1c1c]">
      <svg className="ml-[21px]" width="23" height="23" viewBox="0 0 23 23">
        <defs>
          <linearGradient id="winBlue" x1="0" y1="0" x2="1" y2="1">
            <stop offset="0" stopColor="#4cc8f7" />
            <stop offset="1" stopColor="#0669c8" />
          </linearGradient>
        </defs>
        <path d="M0 0h11v11H0zM12 0h11v11H12zM0 12h11v11H0zM12 12h11v11H12z" fill="url(#winBlue)" />
      </svg>
      <div className="ml-[15px] flex h-[30px] w-[98px] items-center rounded-full bg-[#faf2f0] pl-[22px] shadow-[0_0_1px_rgba(0,0,0,0.25)]">
        <svg width="15" height="15" viewBox="0 0 15 15" fill="none" stroke="#1c1c1c" strokeWidth="1.500">
          <circle cx="8.700" cy="5.800" r="4.800" />
          <path d="M5.300 9.300L.8 13.800" />
        </svg>
        <span className="mt-[2px] ml-1 text-[12px] tracking-[-0.4px]">Search</span>
      </div>
      <div className="ml-[3px] flex">
        {taskItems.map(({ icon, running, focused }, i) => (
          <div key={i} className="flex w-11 flex-col items-center">
            <div
              className={
                focused
                  ? 'ml-px flex h-[38px] w-[38px] flex-col items-center rounded-[4px] bg-[#f6eaee] pt-[7px] shadow-[0_0_1px_rgba(0,0,0,0.3)]'
                  : 'ml-px flex h-[38px] w-[38px] flex-col items-center pt-[7px]'
              }
            >
              <div className="flex h-6 items-center">{icon}</div>
              {running && <div className="mt-[4px] h-[3px] w-[6px] rounded-full bg-[#7f7a80]" />}
              {focused && <div className="mt-[4px] h-[3px] w-4 rounded-full bg-[#0a78d4]" />}
            </div>
          </div>
        ))}
      </div>
      <div className="ml-auto flex items-center">
        <svg width="12" height="8" viewBox="0 0 12 8" fill="none" stroke="#1c1c1c" strokeWidth="1.300">
          <path d="M.6 7L6 1.300 11.400 7" />
        </svg>
        <svg className="ml-[18px]" width="16" height="13" viewBox="0 0 16 13" fill="none" stroke="#1c1c1c" strokeWidth="1.200">
          <path d="M.7 5a10.300 10.300 0 0 1 14.600 0M3 7.300a7 7 0 0 1 10 0M5.200 9.500a4 4 0 0 1 5.600 0" />
          <circle cx="8" cy="11.400" r="1.300" fill="#1c1c1c" stroke="none" />
        </svg>
        <svg className="ml-2" width="16" height="13" viewBox="0 0 16 13" fill="none" stroke="#1c1c1c" strokeWidth="1.100">
          <path d="M.6 4.500h2.700L6.700 1.300v10.400L3.300 8.500H.6z" strokeLinejoin="round" />
          <path d="M8.800 4.500a3 3 0 0 1 0 4M10.800 2.800a5.400 5.400 0 0 1 0 7.400" />
          <path d="M13 1.200a8 8 0 0 1 0 10.600" stroke="#a9a8ad" />
        </svg>
        <svg className="ml-2" width="17" height="11" viewBox="0 0 17 11" fill="none" stroke="#1c1c1c" strokeWidth="1.200">
          <rect x=".6" y=".6" width="13.300" height="9.600" rx="1.800" />
          <path d="M2.500 2.500h6.300v5.800H2.500z" fill="#1c1c1c" stroke="none" />
          <path d="M15.500 3.800v3.200" strokeWidth="1.500" />
        </svg>
        <div className="mr-[19px] ml-[15px] pt-px text-right text-[12px] leading-4 tracking-[-0.23px]">
          <div className="tracking-[-0.45px]">12:32 AM</div>
          <div>25/02/2023</div>
        </div>
      </div>
    </div>
  );
}

export default function App() {
  return (
    <div className="flex h-[768px] w-[1366px] flex-col overflow-hidden [font-family:'Noto_Sans','Open_Sans',sans-serif]">
      <TabStrip />
      <NavToolbar />
      <ConsoleHeader />
      <div className="flex h-[535px] overflow-hidden">
        <Sidebar />
        <main className="flex w-[1086px] shrink-0 flex-col bg-[#f2f3f3]">
          <SuccessBanner />
          <Content />
        </main>
        <aside className="flex flex-1 justify-center bg-white pt-3 text-[#545b64]">
          <InfoCircle />
        </aside>
      </div>
      <ConsoleFooter />
      <Taskbar />
    </div>
  );
}
